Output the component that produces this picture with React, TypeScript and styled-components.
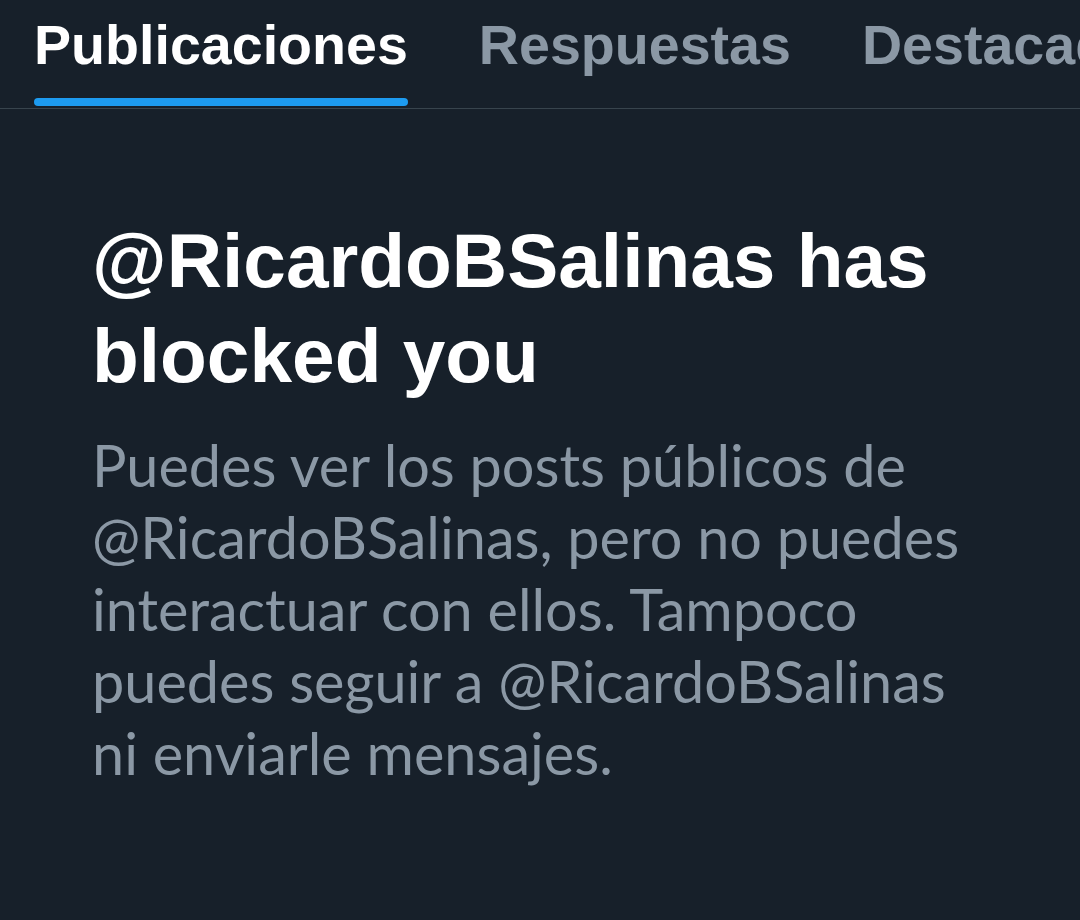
import React from 'react';
import styled, { createGlobalStyle } from 'styled-components';

const GlobalStyle = createGlobalStyle`
  html, body {
    margin: 0;
    padding: 0;
    background: #17202a;
  }
  body {
    font-family: "Liberation Sans", Arial, sans-serif;
    overflow: hidden;
  }
`;

const Page = styled.div`
  width: 1080px;
  height: 920px;
  background: #17202a;
  overflow: hidden;
`;

const TabBar = styled.nav`
  display: flex;
  gap: 71px;
  padding-left: 34px;
  height: 108px;
  border-bottom: 1px solid #38444d;
  white-space: nowrap;
  overflow: hidden;
`;

const Tab = styled.div<{ $active?: boolean }>`
  position: relative;
  flex-shrink: 0;
  display: flex;
  align-items: center;
  height: 100%;
  padding-bottom: 18px;
  box-sizing: border-box;
  font-size: 55.6px;
  font-weight: 700;
  color: ${(p) => (p.$active ? '#ffffff' : '#8b98a5')};

  &::after {
    content: '';
    display: ${(p) => (p.$active ? 'block' : 'none')};
    position: absolute;
    left: 0;
    right: 0;
    bottom: 2px;
    height: 8px;
    border-radius: 4px;
    background: #1d9bf0;
  }
`;

const Content = styled.section`
  padding: 104px 40px 0 92px;
`;

const Title = styled.h1`
  margin: 0;
  font-size: 76.6px;
  line-height: 95px;
  font-weight: 700;
  color: #ffffff;
  white-space: nowrap;
`;

const Description = styled.p`
  margin: 26px 0 0;
  font-family: Lato, "Liberation Sans", sans-serif;
  font-size: 57.6px;
  line-height: 72px;
  color: #8b98a5;
  white-space: nowrap;
`;

export default function App() {
  return (
    <Page>
      <GlobalStyle />
      <TabBar>
        <Tab $active>Publicaciones</Tab>
        <Tab>Respuestas</Tab>
        <Tab>Destacados</Tab>
      </TabBar>
      <Content>
        <Title>
          @RicardoBSalinas has
          <br />
          blocked you
        </Title>
        <Description>
          Puedes ver los posts públicos de
          <br />
          @RicardoBSalinas, pero no puedes
          <br />
          interactuar con ellos. Tampoco
          <br />
          puedes seguir a @RicardoBSalinas
          <br />
          ni enviarle mensajes.
        </Description>
      </Content>
    </Page>
  );
}
